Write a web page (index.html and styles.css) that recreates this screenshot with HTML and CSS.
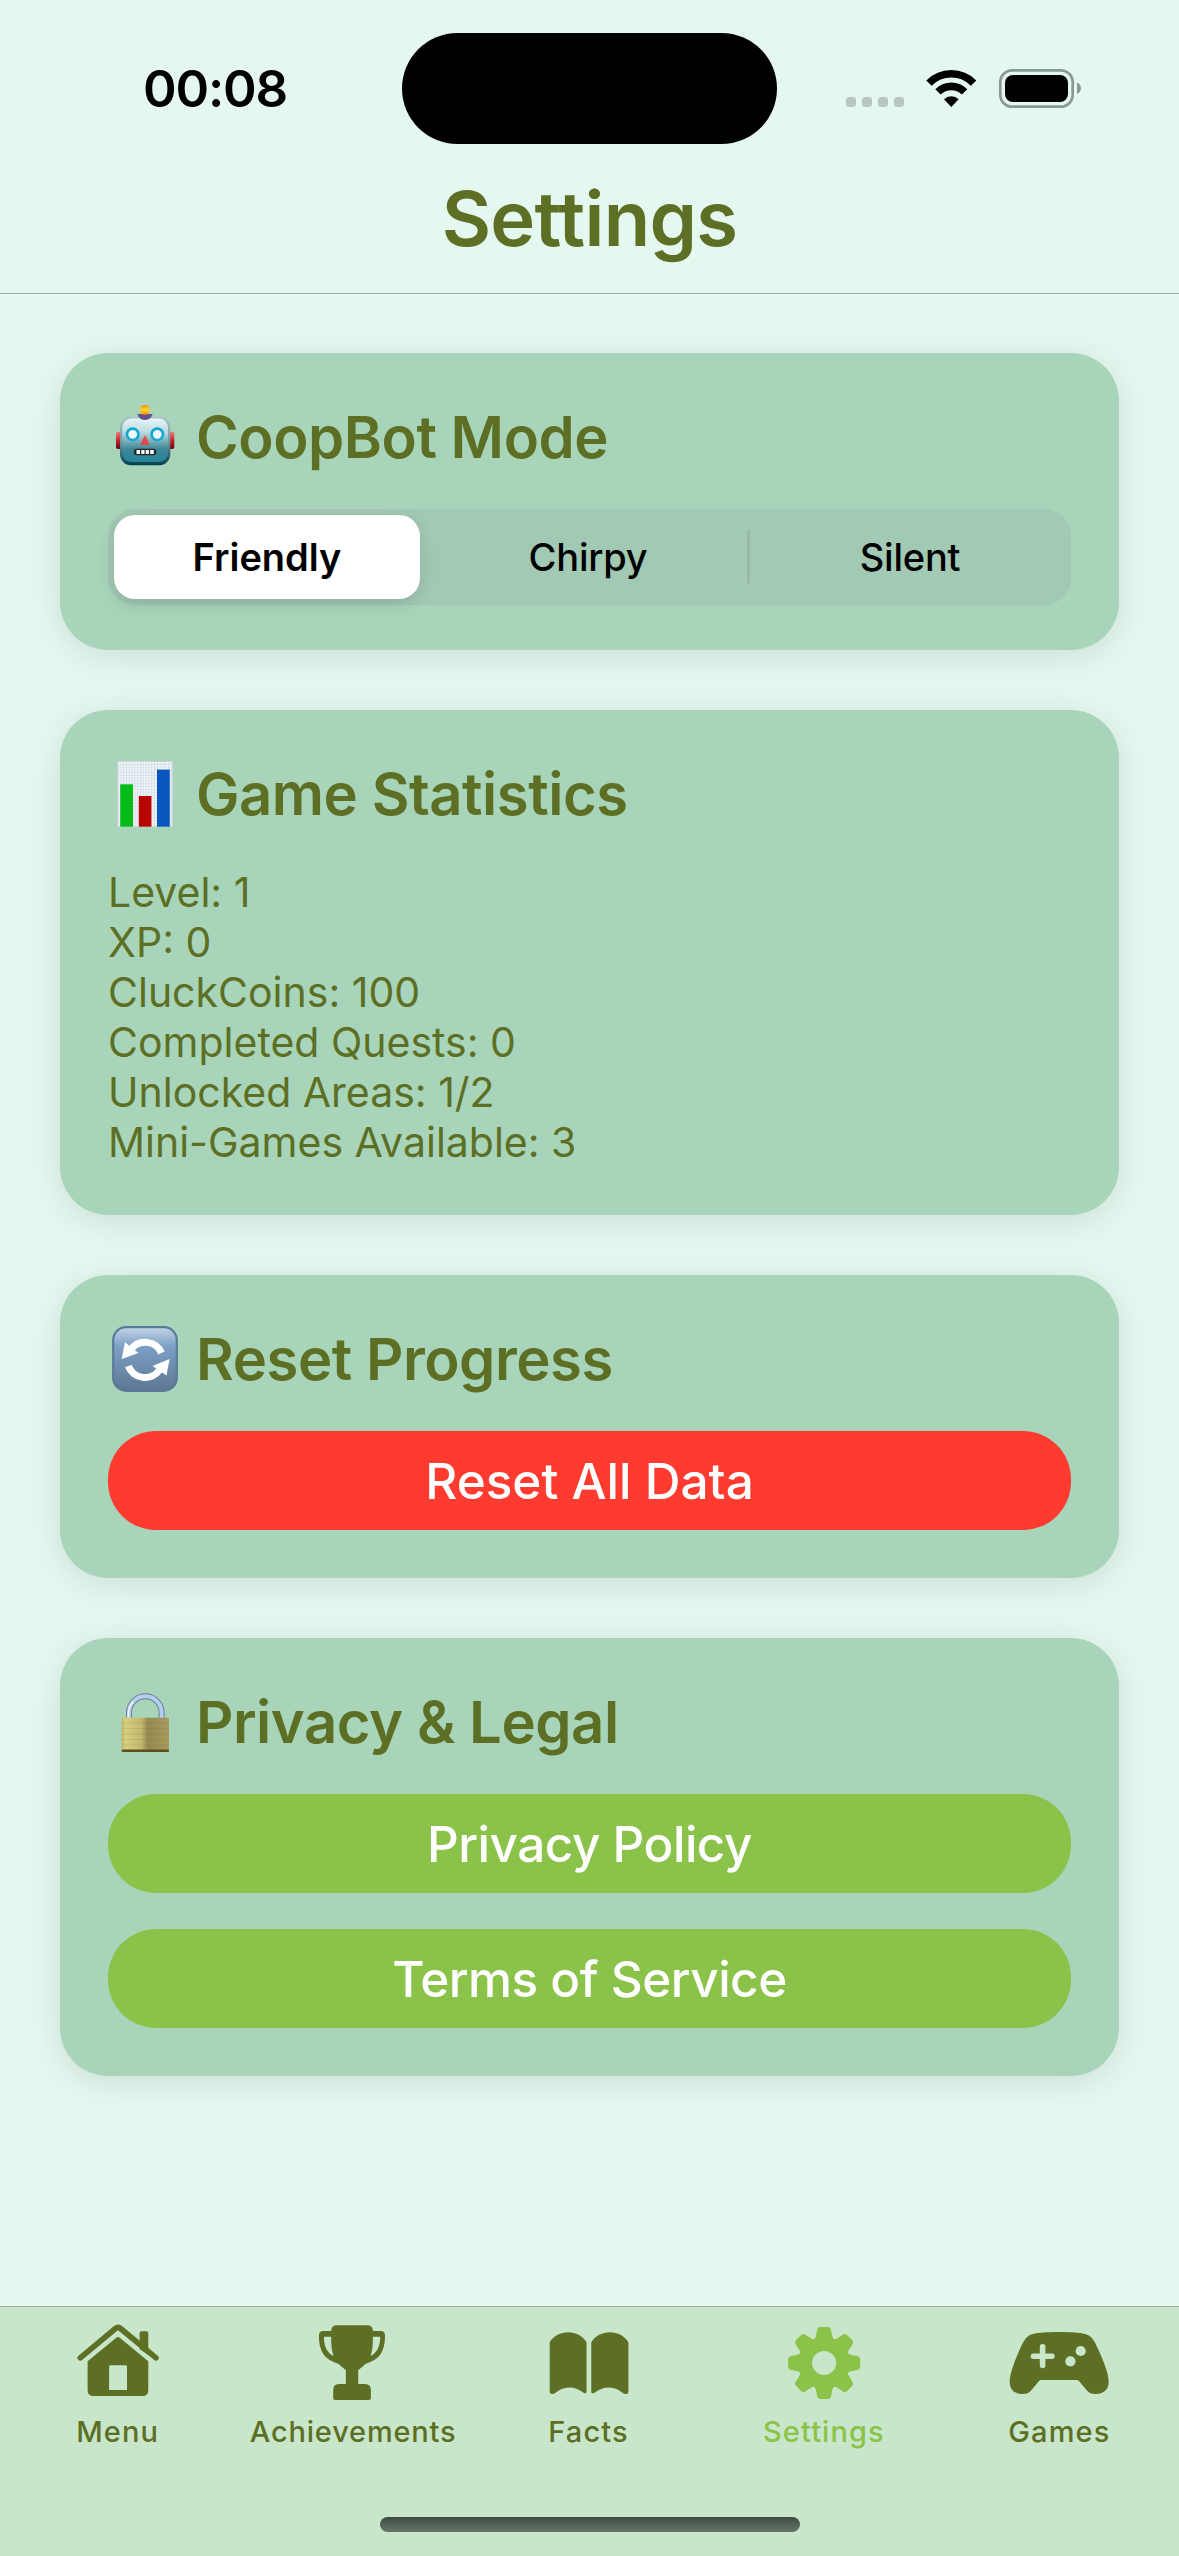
FILE: index.html
```
<!DOCTYPE html>
<html lang="en">
<head>
<meta charset="utf-8">
<title>Settings</title>
<link rel="stylesheet" href="styles.css">
</head>
<body>
<div class="screen">
  <header class="header">
    <div class="status">
      <span class="time">00:08</span>
      <span class="island"></span>
      <svg class="status-icons" viewBox="0 0 240 44">
        <g fill="#b7c7bf">
          <rect x="2" y="30" width="10" height="10" rx="3.5"/>
          <rect x="18" y="30" width="10" height="10" rx="3.5"/>
          <rect x="34" y="30" width="10" height="10" rx="3.5"/>
          <rect x="50" y="30" width="10" height="10" rx="3.5"/>
        </g>
        <g fill="none" stroke="#000" stroke-width="7.6">
          <path d="M85 16.1A31.2 31.2 0 0 1 129.6 16.1"/>
          <path d="M94 24.9A18.7 18.7 0 0 1 120.6 24.9"/>
        </g>
        <path d="M100 32.2A10.6 10.6 0 0 1 114.6 32.2L107.3 40Z"/>
        <rect x="156.3" y="3.3" width="72.4" height="36.4" rx="12" fill="none" stroke="#8c9993" stroke-width="2.7"/>
        <rect x="161" y="8" width="63" height="27" rx="8"/>
        <path d="M233 15.5Q237 17.500 237 21.300T233 27.100Z" fill="#8c9993"/>
      </svg>
    </div>
    <h1 class="title">Settings</h1>
  </header>

  <main class="content">
    <section class="card card-mode">
      <h2 class="heading">
        <svg class="emoji" viewBox="0 0 66 66">
          <defs>
            <linearGradient id="face" x1="0" y1="0" x2="0" y2="1">
              <stop offset="0" stop-color="#e6f5f8"/><stop offset=".32" stop-color="#bcdadf"/>
              <stop offset=".7" stop-color="#3f8797"/><stop offset="1" stop-color="#25849a"/>
            </linearGradient>
            <linearGradient id="rim" x1="0" y1="0" x2="0" y2="1">
              <stop offset="0" stop-color="#b0c4c4"/><stop offset=".5" stop-color="#6e9ca4"/><stop offset="1" stop-color="#05404f"/>
            </linearGradient>
            <linearGradient id="bulb" x1="0" y1="0" x2="0" y2="1">
              <stop offset="0" stop-color="#f98b0c"/><stop offset=".5" stop-color="#ffd935"/><stop offset="1" stop-color="#f58a00"/>
            </linearGradient>
            <linearGradient id="ear" x1="0" y1="0" x2="0" y2="1">
              <stop offset="0" stop-color="#f27373"/><stop offset=".6" stop-color="#b81822"/><stop offset="1" stop-color="#5c0c16"/>
            </linearGradient>
          </defs>
          <rect x="4" y="28" width="8" height="17" rx="2" fill="url(#ear)"/>
          <rect x="54.300" y="28" width="8" height="17" rx="2" fill="url(#ear)"/>
          <rect x="8" y="12.500" width="50.300" height="48.700" rx="11" fill="url(#rim)"/>
          <rect x="10.300" y="14.500" width="45.700" height="43.500" rx="9" fill="url(#face)"/>
          <path d="M25.300 10H40.700Q38.500 16 33 16T25.300 10Z" fill="#66508c"/>
          <rect x="28" y="1" width="9.600" height="9.800" rx="4.300" fill="url(#bulb)"/>
          <g fill="#eef9fb" stroke="#13a8d4" stroke-width="2.600">
            <circle cx="20.700" cy="30.300" r="5.700"/><circle cx="45.300" cy="30.300" r="5.700"/>
          </g>
          <path d="M33 31L37.700 41H28.300Z" fill="#e0484c"/>
          <rect x="21.800" y="44.800" width="22.500" height="6.500" rx="3.200" fill="#23282b"/>
          <path d="M24.500 46h3.500v4h-3.500zM29.300 46h3.200v4h-3.200zM33.700 46h3.200v4h-3.200zM38.200 46h3.500v4h-3.500z" fill="#fff"/>
        </svg>
        <span>CoopBot Mode</span>
      </h2>
      <div class="segmented">
        <span class="segment selected">Friendly</span>
        <span class="segment">Chirpy</span>
        <span class="segment divided">Silent</span>
      </div>
    </section>

    <section class="card card-stats">
      <h2 class="heading">
        <svg class="emoji" viewBox="0 0 66 66">
          <defs>
            <pattern id="grid" width="2.800" height="2.800" patternUnits="userSpaceOnUse">
              <rect width="2.800" height="2.800" fill="#f3f5f7"/><path d="M0 0H2.800M0 0V2.800" stroke="#c2d3e4" stroke-width="1"/>
            </pattern>
          </defs>
          <rect x="5.800" y=".3" width="54.600" height="65.500" fill="url(#grid)" stroke="#cbd1d5" stroke-width=".8"/>
          <rect x="8.200" y="23.300" width="12.800" height="42.400" fill="#05bb18"/>
          <rect x="26.800" y="35" width="12.600" height="30.700" fill="#b90000"/>
          <rect x="45" y="8.600" width="12.800" height="57.100" fill="#0757bd"/>
        </svg>
        <span>Game Statistics</span>
      </h2>
      <ul class="stats">
        <li>Level: 1</li>
        <li>XP: 0</li>
        <li>CluckCoins: 100</li>
        <li>Completed Quests: 0</li>
        <li>Unlocked Areas: 1/2</li>
        <li>Mini-Games Available: 3</li>
      </ul>
    </section>

    <section class="card">
      <h2 class="heading">
        <svg class="emoji" viewBox="0 0 66 66">
          <defs>
            <linearGradient id="tile" x1="0" y1="0" x2="0" y2="1">
              <stop offset="0" stop-color="#c5d5e5"/><stop offset=".3" stop-color="#7da0c6"/><stop offset=".65" stop-color="#6c8cac"/><stop offset="1" stop-color="#5e7792"/>
            </linearGradient>
          </defs>
          <rect x="1.200" y="1.200" width="63.600" height="63.600" rx="13" fill="url(#tile)" stroke="#5b7998" stroke-width="2.200"/>
          <g fill="none" stroke="#fff" stroke-width="7">
            <path d="M49.500 27A17.800 17.800 0 0 0 18.500 24"/>
            <path d="M16.300 40A17.800 17.800 0 0 0 47.500 44"/>
          </g>
          <path d="M13 16.300L26.500 27L9.600 33Z" fill="#fff"/>
          <path d="M57.600 33L40.500 40L54.500 49.500Z" fill="#fff"/>
        </svg>
        <span>Reset Progress</span>
      </h2>
      <div class="button danger">Reset All Data</div>
    </section>

    <section class="card">
      <h2 class="heading">
        <svg class="emoji" viewBox="0 0 66 66">
          <defs>
            <linearGradient id="brass" x1="0" y1="0" x2="1" y2="0">
              <stop offset="0" stop-color="#bdb468"/><stop offset=".08" stop-color="#d8d080"/><stop offset=".42" stop-color="#c2b76e"/><stop offset=".55" stop-color="#94894f"/><stop offset="1" stop-color="#a79b5d"/>
            </linearGradient>
          </defs>
          <path d="M17 31V23.600a16.300 16.300 0 0 1 32.600 0V31" fill="none" stroke="#71808f" stroke-width="6"/>
          <path d="M17 31V23.600a16.300 16.300 0 0 1 32.600 0V31" fill="none" stroke="#b4cdf0" stroke-width="4"/>
          <path d="M16.300 31V23.600a17 17 0 0 1 5-11" fill="none" stroke="#eef4fb" stroke-width="1.500"/>
          <rect x="9.600" y="28.700" width="47.400" height="34" rx="1" fill="url(#brass)"/>
          <path d="M10 34H57M10 39.500H57M10 45H57M10 50.500H57M10 56H57" stroke="#6f6434" stroke-opacity=".15"/>
          <rect x="9.600" y="60.600" width="47.400" height="2.400" rx="1" fill="#5f4d22"/>
        </svg>
        <span>Privacy &amp; Legal</span>
      </h2>
      <div class="buttons">
        <div class="button tight">Privacy Policy</div>
        <div class="button tight">Terms of Service</div>
      </div>
    </section>
  </main>

  <nav class="tabbar">
    <div class="tabs">
      <div class="tab">
        <svg class="tab-icon" viewBox="0 0 100 78">
          <path d="M71.600 27V11.500Q71.600 9.300 73.800 9.300H78.100Q80.300 9.300 80.300 11.500V33Z"/>
          <path d="M12.300 35.800L47.500 6.500Q50 4.400 52.500 6.500L88 35.800" fill="none" stroke="currentColor" stroke-width="5.600" stroke-linecap="round"/>
          <path fill-rule="evenodd" d="M48.600 15.600Q50 14.200 51.400 15.600L80.300 39.200V68Q80.300 74 74.300 74H25.600Q19.600 74 19.600 68V39.200ZM42.500 43.300Q41.100 43.300 41.100 44.700V68H59V44.700Q59 43.300 57.600 43.300Z"/>
        </svg>
        <span>Menu</span>
      </div>
      <div class="tab tab-wide">
        <svg class="tab-icon" viewBox="0 0 100 78">
          <path fill-rule="evenodd" d="M34 3.300H64Q69.900 3.300 69.900 9H78Q82 9 82 14C82 30 76 38 62.800 41.700L55.200 48.300V62H62Q67.900 62 67.900 68V76Q67.900 78 66 78H32Q30.200 78 30.200 76V68Q30.200 62 36 62H42.900V48.300L35.300 41.700C22 38 15.900 30 15.900 14Q15.900 9 20 9H28.200Q28.200 3.300 34 3.300ZM28.200 14.700H20.900C20.900 24 24 31 30.500 34C28.500 28 28.200 22 28.200 14.700ZM69.900 14.700H77.200C77.200 24 74 31 67.600 34C69.600 28 69.900 22 69.900 14.700Z"/>
        </svg>
        <span>Achievements</span>
      </div>
      <div class="tab">
        <svg class="tab-icon" viewBox="0 0 100 78">
          <path d="M10.700 20.300C18 7 40 6.500 47.500 20.300V70Q47 72 45 71C36 63.500 24 63.500 15.500 71.500Q11 73 10.700 70Z"/>
          <path d="M89.400 20.300C82.100 7 60.100 6.500 52.300 20.300V70Q53 72 55 71C64 63.500 76 63.500 84.600 71.500Q89.100 73 89.400 70Z"/>
        </svg>
        <span>Facts</span>
      </div>
      <div class="tab active">
        <svg class="tab-icon" viewBox="0 0 100 78">
          <defs>
            <path id="tooth" d="M-10.500-23Q-8.600-25-8.300-26.500L-7-33Q-6.200-36-3.800-36H3.800Q6.200-36 7-33L8.300-26.500Q8.600-25 10.500-23L6-12H-6Z"/>
          </defs>
          <mask id="hub"><rect x="-40" y="-40" width="80" height="80" fill="#fff"/><circle r="12" fill="#000"/></mask>
          <g transform="translate(50.100 41)"><g mask="url(#hub)">
            <circle r="25"/>
            <use href="#tooth"/><use href="#tooth" transform="rotate(45)"/><use href="#tooth" transform="rotate(90)"/><use href="#tooth" transform="rotate(135)"/>
            <use href="#tooth" transform="rotate(180)"/><use href="#tooth" transform="rotate(225)"/><use href="#tooth" transform="rotate(270)"/><use href="#tooth" transform="rotate(315)"/>
          </g></g>
        </svg>
        <span>Settings</span>
      </div>
      <div class="tab">
        <svg class="tab-icon" viewBox="0 0 100 78">
          <path d="M50 10C62 10 75 10.500 80 13.500Q83.500 15.500 86 20.500C92 33 99.700 50 99.700 60C99.700 68 94 72 86.600 72C82 72 79.500 70.500 77 67.500L70 59Q69 58 67.500 58H32.500Q31 58 30 59L23 67.500C20.500 70.500 18 72 13.400 72C6 72 .7 68 .7 60C.7 50 8 33 14 20.500Q16.500 15.500 20 13.500C25 10.500 38 10 50 10Z"/>
          <g fill="#c8e6c9">
            <rect x="21.700" y="31.600" width="24" height="5.400" rx="2.700"/>
            <rect x="30.800" y="22" width="5.600" height="24.300" rx="2.700"/>
            <circle cx="71.700" cy="29" r="5.100"/><circle cx="61.400" cy="39.300" r="5.100"/>
          </g>
        </svg>
        <span>Games</span>
      </div>
    </div>
    <div class="home-indicator"></div>
  </nav>
</div>
</body>
</html>
```
FILE: styles.css
```
* { box-sizing: border-box; margin: 0; padding: 0; }

body {
  width: 1179px;
  background: #e4f8ef;
  font-family: Inter, "Liberation Sans", sans-serif;
  color: #5c6f24;
}

.screen {
  display: flex;
  flex-direction: column;
  height: 2556px;
  overflow: hidden;
}

.header {
  height: 294px;
  border-bottom: 1px solid #9fb0a8;
}

.status {
  display: flex;
  align-items: center;
  height: 177px;
  padding-left: 143px;
}

.time {
  width: 259px;
  font-size: 51px;
  font-weight: 600;
  letter-spacing: -1.2px;
  color: #000;
}

.island {
  width: 375px;
  height: 111px;
  border-radius: 56px;
  background: #000;
}

.status-icons {
  width: 240px;
  height: 44px;
  margin-left: 67px;
}

.title {
  font-size: 76px;
  font-weight: 600;
  line-height: 82px;
  letter-spacing: -0.7px;
  text-align: center;
}

.content {
  flex: 1;
  display: flex;
  flex-direction: column;
  gap: 60px;
  padding: 59px 60px 0;
}

.card {
  padding: 48px;
  border-radius: 48px;
  background: #a8d5ba;
  box-shadow: 0 6px 34px rgba(0, 0, 0, 0.1);
}

.card-mode { padding-bottom: 45px; }

.heading {
  display: flex;
  align-items: center;
  gap: 18px;
  height: 72px;
  margin-bottom: 36px;
  padding-left: 4px;
  font-size: 58px;
  font-weight: 600;
  letter-spacing: -0.45px;
}

.emoji {
  width: 66px;
  height: 66px;
}

.segmented {
  display: grid;
  grid-template-columns: 319px 322px 322px;
  height: 96px;
  border-radius: 27px;
  background: #a2c9b3;
}

.segment {
  position: relative;
  display: flex;
  align-items: center;
  justify-content: center;
  font-size: 38px;
  font-weight: 500;
  letter-spacing: -0.2px;
  color: #000;
}

.selected {
  margin: 6px 7px 6px 6px;
  border-radius: 21px;
  background: #fff;
  box-shadow: 0 6px 18px rgba(0, 0, 0, 0.12);
  font-weight: 600;
  letter-spacing: 0;
}

.divided::before {
  content: "";
  position: absolute;
  left: -2px;
  top: 21px;
  width: 3px;
  height: 54px;
  border-radius: 2px;
  background: #9abaa7;
}

.card-stats .heading { margin-bottom: 37px; }

.stats {
  list-style: none;
  font-size: 41px;
  line-height: 50px;
}

.button {
  height: 99px;
  border-radius: 48px;
  background: #8bc34a;
  color: #fff;
  font-size: 49.5px;
  font-weight: 500;
  line-height: 100px;
  text-align: center;
}

.danger { background: #ff3b30; }

.tight { letter-spacing: -0.5px; }

.buttons {
  display: flex;
  flex-direction: column;
  gap: 36px;
}

.tabbar {
  display: flex;
  flex-direction: column;
  align-items: center;
  justify-content: space-between;
  height: 250px;
  padding-bottom: 24px;
  border-top: 1px solid #9fb0a3;
  background: #c8e6c9;
}

.tabs {
  display: flex;
  width: 100%;
  padding: 15px 2px 0 0;
}

.tab {
  flex: 1;
  display: flex;
  flex-direction: column;
  align-items: center;
  gap: 14px;
  font-size: 29px;
  font-weight: 500;
  line-height: 36px;
  letter-spacing: 1.1px;
}

.tab-wide { letter-spacing: 0.8px; }

.tab-icon {
  width: 100px;
  height: 78px;
  fill: currentColor;
}

.active { color: #8bc34a; }

.home-indicator {
  width: 420px;
  height: 15px;
  border-radius: 8px;
  background: linear-gradient(#3f4a41, #66766a);
}
```
